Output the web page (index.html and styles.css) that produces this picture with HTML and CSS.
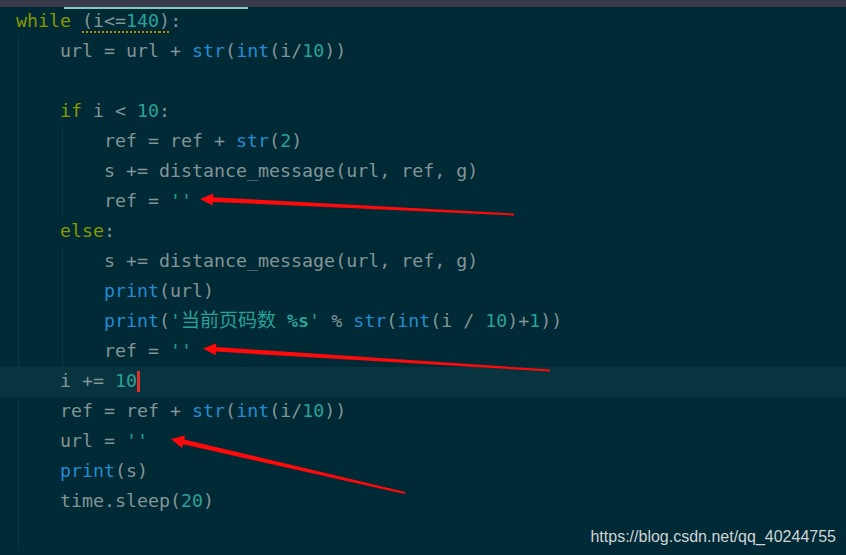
FILE: index.html
```html
<!DOCTYPE html>
<html>
<head>
<meta charset="utf-8">
<link rel="stylesheet" href="styles.css">
</head>
<body>
<div class="topbar"><div class="tab"></div></div>
<div class="editor">
  <div class="line"><span class="kw">while</span> <span class="warn">(i&lt;=<span class="num">140</span>)</span>:</div>
  <div class="block">
    <div class="line">url = url + <span class="fn">str</span>(<span class="fn">int</span>(i/<span class="num">10</span>))</div>
    <div class="line"></div>
    <div class="line"><span class="kw">if</span> i &lt; <span class="num">10</span>:</div>
    <div class="block">
      <div class="line">ref = ref + <span class="fn">str</span>(<span class="num">2</span>)</div>
      <div class="line">s += distance_message(url, ref, g)</div>
      <div class="line">ref = <span class="str">''</span></div>
    </div>
    <div class="line"><span class="kw">else</span>:</div>
    <div class="block">
      <div class="line">s += distance_message(url, ref, g)</div>
      <div class="line"><span class="fn">print</span>(url)</div>
      <div class="line"><span class="fn">print</span>(<span class="str">'<span class="cjk">当前页码数</span> <b>%s</b>'</span> % <span class="fn">str</span>(<span class="fn">int</span>(i / <span class="num">10</span>)+<span class="num">1</span>))</div>
      <div class="line">ref = <span class="str">''</span></div>
    </div>
    <div class="line current">i += <span class="num">10</span><span class="cursor"></span></div>
    <div class="line">ref = ref + <span class="fn">str</span>(<span class="fn">int</span>(i/<span class="num">10</span>))</div>
    <div class="line">url = <span class="str">''</span></div>
    <div class="line"><span class="fn">print</span>(s)</div>
    <div class="line">time.sleep(<span class="num">20</span>)</div>
    <div class="line"></div>
  </div>
</div>
<svg class="arrows" width="846" height="555" viewBox="0 0 846 555">
  <polygon points="200,199 213.3,193.6 213.1,197.3 514.05,213.5 513.95,215.5 212.9,201.9 212.7,205.6"/>
  <polygon points="203,348.5 216.35,343.33 216.12,347.02 550.06,369.5 549.94,371.5 215.82,351.62 215.59,355.31"/>
  <polygon points="171,439 185.13,435.59 184.23,439.48 405.22,492.03 404.78,493.97 183.11,444.36 182.21,448.25"/>
</svg>
<div class="watermark">https://blog.csdn.net/qq_40244755</div>
</body>
</html>
```
FILE: styles.css
```css
html, body {
  margin: 0;
  padding: 0;
  width: 846px;
  height: 555px;
  overflow: hidden;
  background: #002a35;
}
body {
  position: relative;
  font-family: "DejaVu Sans Mono", monospace;
  font-size: 18.3px;
  color: #839496;
}
.topbar {
  position: relative;
  height: 7px;
  background: #3a3b4a;
  z-index: 2;
}
.tab {
  position: absolute;
  left: 64px;
  top: 7px;
  width: 184px;
  height: 2px;
  background: #80cbc4;
}
.editor {
  padding-left: 16px;
}
.line {
  height: 30px;
  line-height: 28px;
  white-space: pre;
}
.block {
  margin-left: 2px;
  border-left: 1px solid #0d3a45;
  padding-left: 41px;
}
.current {
  background: #083440;
  margin-left: -62px;
  padding-left: 62px;
  margin-right: -20px;
}
.kw { color: #859900; }
.num { color: #2aa198; }
.str { color: #2aa198; }
.str b { font-weight: bold; }
.fn { color: #268bd2; }
.cjk {
  font-family: "Noto Sans CJK SC", sans-serif;
  font-size: 19px;
  line-height: 10px;
}
.warn {
  text-decoration: underline dotted #b58900;
  text-decoration-thickness: 2px;
  text-underline-offset: 4px;
}
.cursor {
  display: inline-block;
  width: 3px;
  height: 21px;
  background: #e0302c;
  vertical-align: -5px;
}
.arrows {
  position: absolute;
  left: 0;
  top: 0;
}
.arrows polygon {
  fill: #ff0a0a;
}
.watermark {
  position: absolute;
  right: 10px;
  bottom: 9px;
  font-family: "Liberation Sans", Arial, sans-serif;
  font-size: 16px;
  color: #cfd4d6;
}
```
